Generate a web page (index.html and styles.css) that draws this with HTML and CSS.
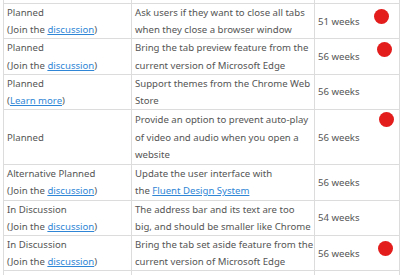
FILE: index.html
```html
<!DOCTYPE html>
<html>
<head>
<meta charset="utf-8">
<link rel="stylesheet" href="styles.css">
</head>
<body>
<table class="roadmap">
  <colgroup>
    <col class="c-status">
    <col class="c-desc">
    <col class="c-age">
  </colgroup>
  <tr class="edge"><td></td><td></td><td></td></tr>
  <tr>
    <td>Planned<br>(Join the <a href="#">discussion</a>)</td>
    <td>Ask users if they want to close all tabs<br>when they close a browser window</td>
    <td class="age"><span class="dot d1"></span>51 weeks</td>
  </tr>
  <tr>
    <td>Planned<br>(Join the <a href="#">discussion</a>)</td>
    <td>Bring the tab preview feature from the<br>current version of Microsoft Edge</td>
    <td class="age"><span class="dot d2"></span>56 weeks</td>
  </tr>
  <tr>
    <td>Planned<br>(<a href="#">Learn more</a>)</td>
    <td>Support themes from the Chrome Web<br>Store</td>
    <td class="age">56 weeks</td>
  </tr>
  <tr class="tall">
    <td>Planned</td>
    <td>Provide an option to prevent auto-play<br>of video and audio when you open a<br>website</td>
    <td class="age"><span class="dot d4"></span>56 weeks</td>
  </tr>
  <tr>
    <td>Alternative Planned<br>(Join the <a href="#">discussion</a>)</td>
    <td>Update the user interface with<br>the <a href="#">Fluent Design System</a></td>
    <td class="age">56 weeks</td>
  </tr>
  <tr>
    <td>In Discussion<br>(Join the <a href="#">discussion</a>)</td>
    <td>The address bar and its text are too<br>big, and should be smaller like Chrome</td>
    <td class="age">54 weeks</td>
  </tr>
  <tr>
    <td>In Discussion<br>(Join the <a href="#">discussion</a>)</td>
    <td>Bring the tab set aside feature from the<br>current version of Microsoft Edge</td>
    <td class="age"><span class="dot d7"></span>56 weeks</td>
  </tr>
  <tr class="edge"><td></td><td></td><td></td></tr>
</table>
</body>
</html>
```
FILE: styles.css
```css
html, body {
  margin: 0;
  padding: 0;
  background: #fff;
  overflow: hidden;
}
body {
  font-family: "Noto Sans", "Open Sans", sans-serif;
  font-size: 9.6px;
  color: #555555;
}
.roadmap {
  border-collapse: collapse;
  margin: -17px 0 0 3px;
  width: 396px;
  table-layout: fixed;
}
.c-status { width: 128px; }
.c-desc { width: 183px; }
.c-age { width: 85px; }
.roadmap td {
  border: 1px solid #dcdcdc;
  padding: 0 3px;
  line-height: 17.2px;
  vertical-align: middle;
  white-space: nowrap;
}
.roadmap tr.edge td { height: 19px; }
.roadmap tr.tall td { height: 54px; }
.roadmap td.age { position: relative; }
a {
  color: #2f86d6;
  text-decoration: underline;
}
.dot {
  position: absolute;
  width: 15px;
  height: 15px;
  border-radius: 50%;
  background: #e31c1c;
}
.d1 { top: 5px; right: 10px; }
.d2 { top: 3px; right: 7px; }
.d4 { top: 2px; right: 5px; }
.d7 { top: 5px; right: 6px; }
```
